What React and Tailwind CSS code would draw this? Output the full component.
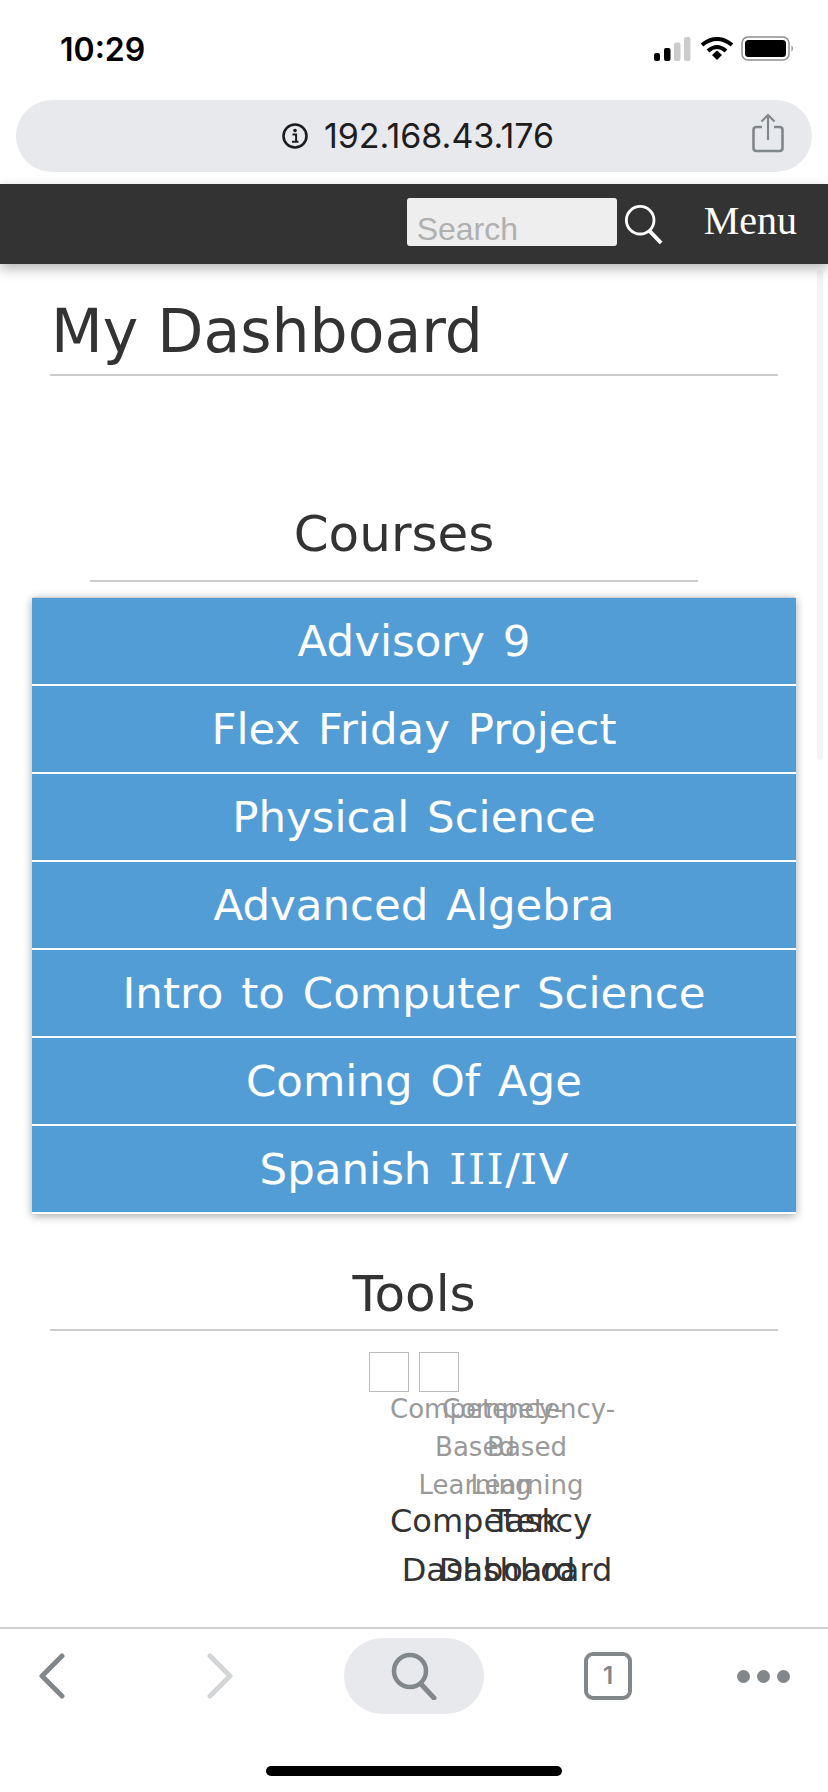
const dejavu = "font-['DejaVu_Sans',sans-serif]";
const serifI = "font-['DejaVu_Serif',serif] tracking-[1.5px]";
const courses = ["Advisory 9", "Flex Friday Project", "Physical Science", "Advanced Algebra", "Intro to Computer Science", "Coming Of Age"];

function StatusBar() {
  return (
    <div className="h-[100px] flex items-start justify-between pl-[60px] pr-[33px] pt-[33px]">
      <span className="font-['Inter',sans-serif] font-semibold text-[32px] leading-[34px] text-black">10:29</span>
      <div className="flex items-center gap-[8px] pt-[3px]">
        <svg width="37" height="24" viewBox="0 0 37 24" className="mr-[2px]">
          <rect x="0" y="16" width="6" height="8" rx="2" fill="#000" />
          <rect x="10" y="11" width="6.5" height="13" rx="2" fill="#000" />
          <rect x="20" y="5.5" width="6.5" height="18.5" rx="2" fill="#ccc" />
          <rect x="30" y="0" width="6.5" height="24" rx="2" fill="#ccc" />
        </svg>
        <svg width="32" height="24" viewBox="0 0 32 24">
          <path d="M1 8 Q16 -4 31 8" fill="none" stroke="#000" strokeWidth="4" />
          <path d="M7 14 Q16 6 25 14" fill="none" stroke="#000" strokeWidth="4" />
          <path d="M11 18 L16 13.5 L21 18 L16 23 Z" fill="#000" />
        </svg>
        <svg width="54" height="25" viewBox="0 0 54 25">
          <rect x="1" y="1" width="47" height="23" rx="6" fill="none" stroke="#8e8e8e" strokeWidth="1.5" />
          <rect x="4" y="4" width="41" height="17" rx="3.5" fill="#000" />
          <path d="M50.5 9 Q53.5 12.5 50.5 16 Z" fill="#8e8e8e" />
        </svg>
      </div>
    </div>
  );
}

function AddressBar() {
  return (
    <div className="mx-[16px] h-[72px] rounded-[36px] bg-[#e8e9ed] relative flex items-center justify-center">
      <div className="flex items-center gap-[15px] text-[#1d1d20] ml-[7px]">
        <svg width="28" height="28" viewBox="0 0 28 28">
          <circle cx="14" cy="14" r="11.5" fill="none" stroke="#1d1d20" strokeWidth="2.6" />
          <circle cx="14" cy="8.5" r="1.8" fill="#1d1d20" />
          <path d="M11.5 12.5h3.6v7M11 19.8h6.5" fill="none" stroke="#1d1d20" strokeWidth="2" />
        </svg>
        <span className="font-['Inter',sans-serif] text-[34px] leading-[40px]">192.168.43.176</span>
      </div>
      <svg width="32" height="40" viewBox="0 0 32 40" className="absolute right-[28px] top-[13px]">
        <path d="M10 14H4.5Q1.5 14 1.5 17V35Q1.5 38 4.5 38H27.5Q30.5 38 30.5 35V17Q30.5 14 27.5 14H22" fill="none" stroke="#82878b" strokeWidth="2.6" />
        <path d="M16 27V3M9.5 8.5L16 2L22.5 8.5" fill="none" stroke="#82878b" strokeWidth="2.2" />
      </svg>
    </div>
  );
}

function NavBar() {
  return (
    <div className="mt-[12px] h-[80px] bg-[#333333] shadow-[0_5px_12px_rgba(0,0,0,0.28)] relative z-10 flex items-start justify-end pr-[31px] pt-[14px]">
      <div className="w-[210px] h-[48px] bg-[#eeeeee] rounded-[3px] pl-[10px] pt-[14px] font-['Liberation_Sans',sans-serif] text-[32px] leading-[34px] text-[#b0b0b0]">Search</div>
      <svg width="40" height="40" viewBox="0 0 42 42" className="ml-[7px] mt-[6px]">
        <circle cx="17" cy="17" r="14.5" fill="none" stroke="#fff" strokeWidth="3" />
        <path d="M26.5 28L39 41" fill="none" stroke="#fff" strokeWidth="4" />
      </svg>
      <span className="ml-[40px] mt-[2px] font-['Liberation_Serif',serif] text-[40px] leading-[42px] text-white">Menu</span>
    </div>
  );
}

function Tool({ gray, black, grayClass = "", blackClass = "" }) {
  return (
    <div className="w-[50px]">
      <div className="w-[40px] h-[40px] border border-[#bbbbbb]" />
      <div className={`mt-[-2px] w-[170px] text-center text-[#999999] text-[26px] leading-[38px] ${grayClass}`}>
        {gray.map((l) => <div key={l} className="whitespace-nowrap">{l}</div>)}
      </div>
      <div className={`w-[197px] text-center text-[#333333] text-[32px] leading-[49px] mt-[-7px] ${blackClass}`}>
        {black.map((l) => <div key={l} className="whitespace-nowrap">{l}</div>)}
      </div>
    </div>
  );
}

function Page() {
  return (
    <main className={`flex-1 relative overflow-hidden text-[#333333] ${dejavu}`}>
      <div className="absolute right-[5px] top-[6px] w-[6px] h-[490px] rounded-[3px] bg-[#f4f4f4]" />
      <div className="mx-[50px]">
        <h1 className="h-[112px] border-b-2 border-[#cccccc] pl-[1px] pt-[34px] text-[60px] leading-[66px] whitespace-nowrap">My Dashboard</h1>
      </div>
      <h2 className="mt-[118px] mx-[90px] w-[608px] h-[88px] border-b-2 border-[#cccccc] pt-[9px] text-center text-[50px] leading-[62px]">Courses</h2>
      <ul className="mt-[15px] mx-[32px] rounded-[2px] border-t border-[#cfcfcf] shadow-[0_2px_10px_rgba(0,0,0,0.35)]">
        {courses.map((c) => (
          <li key={c} className="h-[88px] bg-[#539dd6] border-b-2 border-white flex items-center justify-center text-white text-[43.5px] [word-spacing:4px] whitespace-nowrap pt-[2px]">{c}</li>
        ))}
        <li className="h-[88px] bg-[#539dd6] border-b-2 border-white flex items-center justify-center text-white text-[43.5px] [word-spacing:4px] whitespace-nowrap pt-[2px]">
          <span>Spanish <span className={serifI}>III</span>/<span className={serifI}>I</span>V</span>
        </li>
      </ul>
      <div className="mx-[50px] mt-[42px] h-[75px] border-b-2 border-[#cccccc] pt-[7px] text-center text-[50px] leading-[62px]">Tools</div>
      <div className="mt-[21px] pl-[369px] flex">
        <Tool gray={["Competency-", "Based", "Learning"]} black={["Competency", "Dashboard"]} grayClass="ml-[21px]" blackClass="ml-[21px]" />
        <Tool gray={["Competency-", "Based", "Learning"]} black={["Task", "Dashboard"]} grayClass="ml-[23px]" blackClass="ml-[8px]" />
      </div>
    </main>
  );
}

function BottomBar() {
  return (
    <div className="h-[165px] border-t-2 border-[#d0d0d0] bg-white relative z-10">
      <div className="h-[94px] flex items-center pl-[39px]">
        <svg width="26" height="46" viewBox="0 0 26 46">
          <path d="M23 3L3 23L23 43" fill="none" stroke="#82878b" strokeWidth="5" strokeLinecap="round" strokeLinejoin="round" />
        </svg>
        <svg width="26" height="46" viewBox="0 0 26 46" className="ml-[142px]">
          <path d="M3 3L23 23L3 43" fill="none" stroke="#d4d5d6" strokeWidth="5" strokeLinecap="round" strokeLinejoin="round" />
        </svg>
        <div className="ml-[111px] w-[140px] h-[76px] rounded-[38px] bg-[#e8e9ed] flex items-center justify-center">
          <svg width="46" height="48" viewBox="0 0 46 48">
            <circle cx="19" cy="19" r="16" fill="none" stroke="#82878b" strokeWidth="4.5" />
            <path d="M30 32L43 46" fill="none" stroke="#82878b" strokeWidth="5" strokeLinecap="round" />
          </svg>
        </div>
        <div className="ml-[100px] w-[48px] h-[48px] rounded-[9px] border-[4px] border-[#82878b] flex items-center justify-center font-['Inter',sans-serif] font-semibold text-[24px] leading-none text-[#82878b]">1</div>
        <div className="ml-[105px] flex gap-[7px]">
          <span className="w-[13px] h-[13px] rounded-full bg-[#82878b]" />
          <span className="w-[13px] h-[13px] rounded-full bg-[#82878b]" />
          <span className="w-[13px] h-[13px] rounded-full bg-[#82878b]" />
        </div>
      </div>
      <div className="mx-auto mt-[43px] w-[296px] h-[10px] rounded-full bg-black" />
    </div>
  );
}

export default function App() {
  return (
    <div className="w-[828px] h-[1792px] bg-white flex flex-col overflow-hidden">
      <StatusBar />
      <AddressBar />
      <NavBar />
      <Page />
      <BottomBar />
    </div>
  );
}
